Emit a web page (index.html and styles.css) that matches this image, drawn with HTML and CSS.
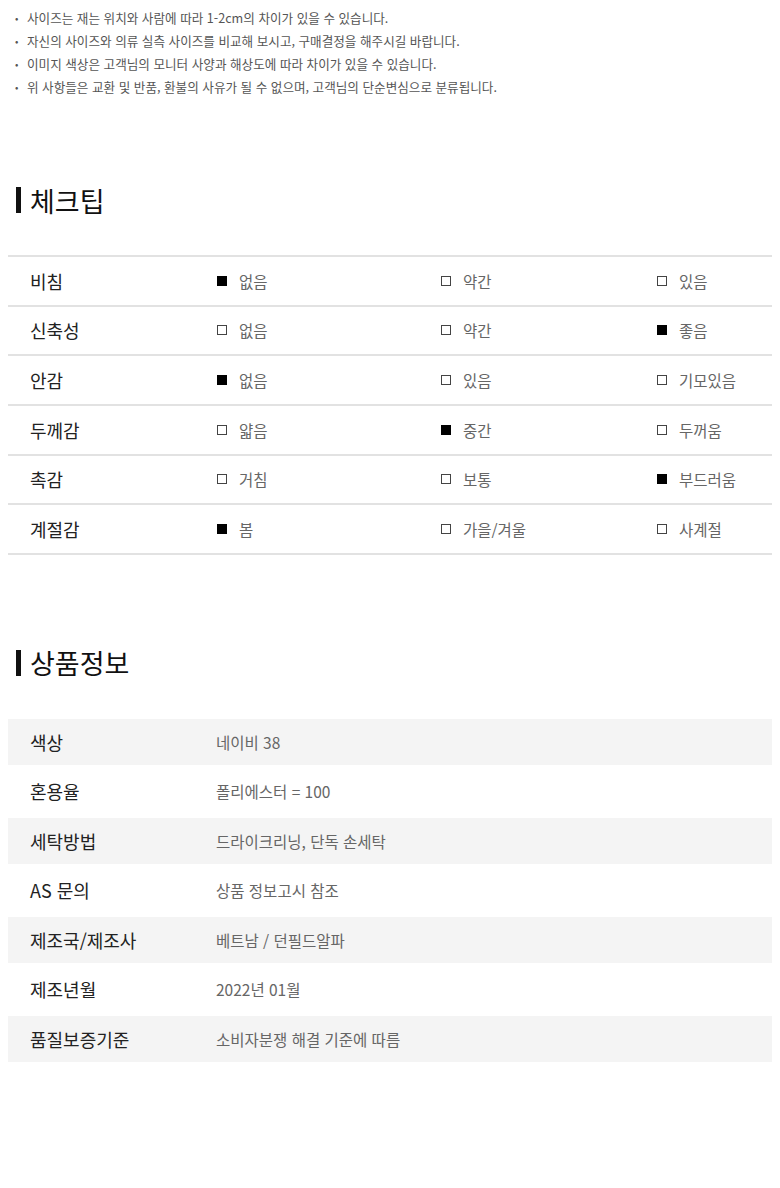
FILE: index.html
```html
<!DOCTYPE html>
<html lang="ko">
<head>
<meta charset="utf-8">
<link rel="stylesheet" href="styles.css">
</head>
<body>
<div class="page">
  <ul class="notes">
    <li><span class="dot">•</span><span>사이즈는 재는 위치와 사람에 따라 1-2cm의 차이가 있을 수 있습니다.</span></li>
    <li><span class="dot">•</span><span>자신의 사이즈와 의류 실측 사이즈를 비교해 보시고, 구매결정을 해주시길 바랍니다.</span></li>
    <li><span class="dot">•</span><span>이미지 색상은 고객님의 모니터 사양과 해상도에 따라 차이가 있을 수 있습니다.</span></li>
    <li><span class="dot">•</span><span>위 사항들은 교환 및 반품, 환불의 사유가 될 수 없으며, 고객님의 단순변심으로 분류됩니다.</span></li>
  </ul>

  <h2 class="heading heading-check"><span class="bar"></span>체크팁</h2>

  <div class="check-table">
    <div class="crow">
      <div class="clabel">비침</div>
      <div class="opt"><span class="box on"></span>없음</div>
      <div class="opt"><span class="box"></span>약간</div>
      <div class="opt"><span class="box"></span>있음</div>
    </div>
    <div class="crow">
      <div class="clabel">신축성</div>
      <div class="opt"><span class="box"></span>없음</div>
      <div class="opt"><span class="box"></span>약간</div>
      <div class="opt"><span class="box on"></span>좋음</div>
    </div>
    <div class="crow">
      <div class="clabel">안감</div>
      <div class="opt"><span class="box on"></span>없음</div>
      <div class="opt"><span class="box"></span>있음</div>
      <div class="opt"><span class="box"></span>기모있음</div>
    </div>
    <div class="crow">
      <div class="clabel">두께감</div>
      <div class="opt"><span class="box"></span>얇음</div>
      <div class="opt"><span class="box on"></span>중간</div>
      <div class="opt"><span class="box"></span>두꺼움</div>
    </div>
    <div class="crow">
      <div class="clabel">촉감</div>
      <div class="opt"><span class="box"></span>거침</div>
      <div class="opt"><span class="box"></span>보통</div>
      <div class="opt"><span class="box on"></span>부드러움</div>
    </div>
    <div class="crow">
      <div class="clabel">계절감</div>
      <div class="opt"><span class="box on"></span>봄</div>
      <div class="opt"><span class="box"></span>가을/겨울</div>
      <div class="opt"><span class="box"></span>사계절</div>
    </div>
  </div>

  <h2 class="heading heading-info"><span class="bar"></span>상품정보</h2>

  <div class="info-table">
    <div class="irow shade"><div class="ilabel">색상</div><div class="ival">네이비 38</div></div>
    <div class="irow"><div class="ilabel">혼용율</div><div class="ival">폴리에스터 = 100</div></div>
    <div class="irow shade"><div class="ilabel">세탁방법</div><div class="ival">드라이크리닝, 단독 손세탁</div></div>
    <div class="irow"><div class="ilabel">AS 문의</div><div class="ival">상품 정보고시 참조</div></div>
    <div class="irow shade"><div class="ilabel">제조국/제조사</div><div class="ival">베트남 / 던필드알파</div></div>
    <div class="irow"><div class="ilabel">제조년월</div><div class="ival">2022년 01월</div></div>
    <div class="irow shade"><div class="ilabel">품질보증기준</div><div class="ival">소비자분쟁 해결 기준에 따름</div></div>
  </div>
</div>
</body>
</html>
```

FILE: styles.css
```css
* { box-sizing: border-box; }
html, body { margin: 0; padding: 0; background: #fff; }
body {
  font-family: "Noto Sans CJK KR", "Noto Sans", sans-serif;
  color: #222;
}
.page {
  width: 780px;
  padding: 6px 8px 0 8px;
}
.notes {
  list-style: none;
  margin: 0;
  padding: 0 0 0 7px;
  font-size: 12.6px;
  line-height: 23px;
  color: #555;
}
.notes li { display: flex; }
.dot { width: 12px; flex: none; font-size: 10px; }

.heading {
  display: flex;
  align-items: center;
  margin: 0;
  height: 40px;
  font-size: 27px;
  font-weight: 400;
  color: #111;
  padding-left: 8px;
  letter-spacing: 0;
}
.heading-check { margin-top: 82px; }
.heading-info { margin-top: 88px; }
.bar {
  width: 5px;
  height: 26px;
  background: #111;
  margin-right: 9px;
  flex: none;
}

.check-table {
  margin-top: 35px;
  border-top: 2px solid #e2e2e2;
}
.crow {
  display: grid;
  grid-template-columns: 209px 224px 216px 1fr;
  align-items: center;
  height: 49.67px;
  border-bottom: 2px solid #e2e2e2;
}
.clabel {
  padding-left: 22px;
  font-size: 18px;
  color: #222;
}
.opt {
  display: flex;
  align-items: center;
  font-size: 15.5px;
  color: #666;
}
.box {
  width: 10px;
  height: 10px;
  border: 1px solid #444;
  margin-right: 12px;
  flex: none;
}
.box.on { background: #000; border-color: #000; }

.info-table {
  margin-top: 36px;
  display: flex;
  flex-direction: column;
  gap: 3.5px;
}
.irow {
  display: grid;
  grid-template-columns: 208px 1fr;
  align-items: center;
  height: 46px;
}
.irow.shade { background: #f4f4f4; }
.ilabel {
  padding-left: 22px;
  font-size: 18px;
  color: #222;
}
.ival {
  font-size: 15.5px;
  color: #666;
}
```
